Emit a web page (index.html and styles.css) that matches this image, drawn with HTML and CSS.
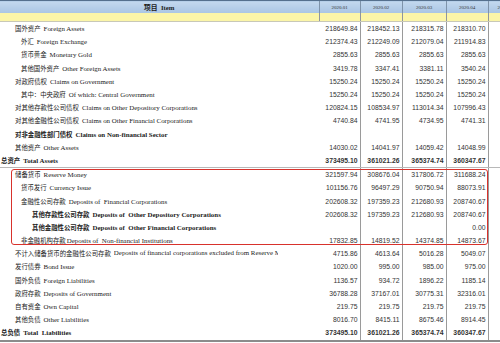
FILE: index.html
```html
<!DOCTYPE html>
<html lang="zh">
<head>
<meta charset="utf-8">
<title>货币当局资产负债表</title>
<link rel="stylesheet" href="styles.css">
</head>
<body>
<div class="wrap">
<table class="sheet">
  <colgroup>
    <col class="c-label"><col class="c-n1"><col class="c-n2"><col class="c-n3"><col class="c-n4"><col class="c-n5">
  </colgroup>
  <thead>
    <tr class="hd">
      <th class="hd-item">项目&nbsp; Item</th>
      <th>2020.01</th><th>2020.02</th><th>2020.03</th><th>2020.04</th><th class="hd-last">2020.05</th>
    </tr>
    <tr class="band">
      <td class="band-l"></td><td></td><td></td><td></td><td></td><td></td>
    </tr>
  </thead>
  <tbody>
    <tr><td class="lbl l1"><span>国外资产</span><span class="en">Foreign Assets</span></td><td class="n">218649.84</td><td class="n">218452.13</td><td class="n">218315.78</td><td class="n">218310.70</td><td class="n"></td></tr>
    <tr><td class="lbl l2"><span>外汇</span><span class="en">Foreign Exchange</span></td><td class="n">212374.43</td><td class="n">212249.09</td><td class="n">212079.04</td><td class="n">211914.83</td><td class="n"></td></tr>
    <tr><td class="lbl l2"><span>货币黄金</span><span class="en">Monetary Gold</span></td><td class="n">2855.63</td><td class="n">2855.63</td><td class="n">2855.63</td><td class="n">2855.63</td><td class="n"></td></tr>
    <tr><td class="lbl l2"><span>其他国外资产</span><span class="en">Other Foreign Assets</span></td><td class="n">3419.78</td><td class="n">3347.41</td><td class="n">3381.11</td><td class="n">3540.24</td><td class="n"></td></tr>
    <tr><td class="lbl l1"><span>对政府债权</span><span class="en">Claims on Government</span></td><td class="n">15250.24</td><td class="n">15250.24</td><td class="n">15250.24</td><td class="n">15250.24</td><td class="n"></td></tr>
    <tr><td class="lbl l2"><span>其中：中央政府</span><span class="en">Of which: Central Government</span></td><td class="n">15250.24</td><td class="n">15250.24</td><td class="n">15250.24</td><td class="n">15250.24</td><td class="n"></td></tr>
    <tr><td class="lbl l1"><span>对其他存款性公司债权</span><span class="en">Claims on Other Depository Corporations</span></td><td class="n">120824.15</td><td class="n">108534.97</td><td class="n">113014.34</td><td class="n">107996.43</td><td class="n"></td></tr>
    <tr><td class="lbl l1"><span>对其他金融性公司债权</span><span class="en">Claims on Other Financial Corporations</span></td><td class="n">4740.84</td><td class="n">4741.95</td><td class="n">4734.95</td><td class="n">4741.31</td><td class="n"></td></tr>
    <tr><td class="lbl l1 b"><span>对非金融性部门债权</span><span class="en">Claims on Non-financial Sector</span></td><td class="n"></td><td class="n"></td><td class="n"></td><td class="n"></td><td class="n"></td></tr>
    <tr><td class="lbl l1"><span>其他资产</span><span class="en">Other Assets</span></td><td class="n">14030.02</td><td class="n">14041.97</td><td class="n">14059.42</td><td class="n">14048.99</td><td class="n"></td></tr>
    <tr class="total sep"><td class="lbl l0 b"><span>总资产</span><span class="en">Total Assets</span></td><td class="n">373495.10</td><td class="n">361021.26</td><td class="n">365374.74</td><td class="n">360347.67</td><td class="n"></td></tr>
    <tr><td class="lbl l1"><span>储备货币</span><span class="en">Reserve Money</span></td><td class="n">321597.94</td><td class="n">308676.04</td><td class="n">317806.72</td><td class="n">311688.24</td><td class="n"></td></tr>
    <tr><td class="lbl l2"><span>货币发行</span><span class="en">Currency Issue</span></td><td class="n">101156.76</td><td class="n">96497.29</td><td class="n">90750.94</td><td class="n">88073.91</td><td class="n"></td></tr>
    <tr><td class="lbl l2"><span>金融性公司存款</span><span class="en">Deposits of&nbsp; Financial Corporations</span></td><td class="n">202608.32</td><td class="n">197359.23</td><td class="n">212680.93</td><td class="n">208740.67</td><td class="n"></td></tr>
    <tr><td class="lbl l3 b"><span>其他存款性公司存款</span><span class="en">Deposits of&nbsp; Other Depository Corporations</span></td><td class="n">202608.32</td><td class="n">197359.23</td><td class="n">212680.93</td><td class="n">208740.67</td><td class="n"></td></tr>
    <tr><td class="lbl l3 b"><span>其他金融性公司存款</span><span class="en">Deposits of&nbsp; Other Financial Corporations</span></td><td class="n"></td><td class="n"></td><td class="n"></td><td class="n">0.00</td><td class="n"></td></tr>
    <tr><td class="lbl l2"><span>非金融机构存款</span><span class="en tight">Deposits of&nbsp; Non-financial Institutions</span></td><td class="n">17832.85</td><td class="n">14819.52</td><td class="n">14374.85</td><td class="n">14873.67</td><td class="n"></td></tr>
    <tr><td class="lbl l1"><span>不计入储备货币的金融性公司存款</span><span class="en cut">Deposits of financial corporations excluded from Reserve Money</span></td><td class="n">4715.86</td><td class="n">4613.64</td><td class="n">5016.28</td><td class="n">5049.07</td><td class="n"></td></tr>
    <tr><td class="lbl l1"><span>发行债券</span><span class="en">Bond Issue</span></td><td class="n">1020.00</td><td class="n">995.00</td><td class="n">985.00</td><td class="n">975.00</td><td class="n"></td></tr>
    <tr><td class="lbl l1"><span>国外负债</span><span class="en">Foreign Liabilities</span></td><td class="n">1136.57</td><td class="n">934.72</td><td class="n">1896.22</td><td class="n">1185.14</td><td class="n"></td></tr>
    <tr><td class="lbl l1"><span>政府存款</span><span class="en">Deposits of Government</span></td><td class="n">36788.28</td><td class="n">37167.01</td><td class="n">30775.31</td><td class="n">32316.01</td><td class="n"></td></tr>
    <tr><td class="lbl l1"><span>自有资金</span><span class="en">Own Capital</span></td><td class="n">219.75</td><td class="n">219.75</td><td class="n">219.75</td><td class="n">219.75</td><td class="n"></td></tr>
    <tr><td class="lbl l1"><span>其他负债</span><span class="en">Other Liabilities</span></td><td class="n">8016.70</td><td class="n">8415.11</td><td class="n">8675.46</td><td class="n">8914.45</td><td class="n"></td></tr>
    <tr class="total last"><td class="lbl l0 b"><span>总负债</span><span class="en">Total&nbsp; Liabilities</span></td><td class="n">373495.10</td><td class="n">361021.26</td><td class="n">365374.74</td><td class="n">360347.67</td><td class="n"></td></tr>
  </tbody>
</table>
<div class="highlight"></div>
</div>
</body>
</html>
```
FILE: styles.css
```css
html, body {
  margin: 0;
  padding: 0;
  background: #ffffff;
}

.wrap {
  position: relative;
  width: 500px;
  height: 343px;
  overflow: hidden;
}

.sheet {
  border-collapse: collapse;
  table-layout: fixed;
  width: 528px;
  color: #222;
}

.c-label { width: 319px; }
.c-n1 { width: 41px; }
.c-n2 { width: 42px; }
.c-n3 { width: 44px; }
.c-n4 { width: 42px; }
.c-n5 { width: 40px; }

.sheet th,
.sheet td {
  padding: 0;
  white-space: nowrap;
  overflow: hidden;
}

/* header */
.hd th {
  height: 12px;
  background: linear-gradient(#c3d8ee, #a9c5e4);
  border-top: 1px solid #55708e;
  border-left: 1px solid #7e93aa;
  font-family: "Liberation Serif", "Noto Sans CJK SC", serif;
  font-size: 5px;
  font-weight: normal;
  color: #333;
  text-align: center;
}

.hd th.hd-item {
  border-left: none;
  font-size: 6.8px;
  font-weight: bold;
  color: #222;
}

.hd th.hd-last {
  text-align: left;
  padding-left: 9px;
}

.band td {
  height: 8px;
  background: #fbf5a8;
  border-left: 1px solid #8f95a0;
  border-bottom: 1px solid #c8c8b8;
}

.band td.band-l {
  border-left: none;
}

/* body rows */
.sheet tbody td {
  height: 13.2px;
  line-height: 13px;
}

.lbl {
  font-family: "Liberation Serif", "Noto Sans CJK SC", serif;
  font-size: 6.4px;
  color: #222;
}

.lbl span {
  line-height: 1;
}

.lbl .en {
  margin-left: 3px;
  font-size: 6.9px;
}

.lbl .en.tight {
  margin-left: 1px;
}

.lbl .en.cut {
  display: inline-block;
  width: 164px;
  overflow: hidden;
  vertical-align: -1px;
}

.l0 { padding-left: 1px !important; }
.l1 { padding-left: 15px !important; }
.l2 { padding-left: 21px !important; }
.l3 { padding-left: 32px !important; }

.b { font-weight: bold; }

.n {
  font-family: "Liberation Sans", Arial, sans-serif;
  font-size: 6.8px;
  color: #333;
  text-align: right;
  padding-right: 2px !important;
  border-left: 1px solid #9a9a9a;
}

.sheet tbody tr td.n:nth-child(2) {
  border-left: none;
}

.total .n {
  font-weight: bold;
}

.sep td {
  border-bottom: 1px solid #b8b8b8;
}

.last td {
  border-bottom: 2px solid #8c8c8c;
}

/* red annotation box over the reserve money block */
.highlight {
  position: absolute;
  left: 11px;
  top: 169px;
  width: 475px;
  height: 74px;
  border: 1.5px solid #d8322c;
  border-radius: 3px;
  pointer-events: none;
}
```
